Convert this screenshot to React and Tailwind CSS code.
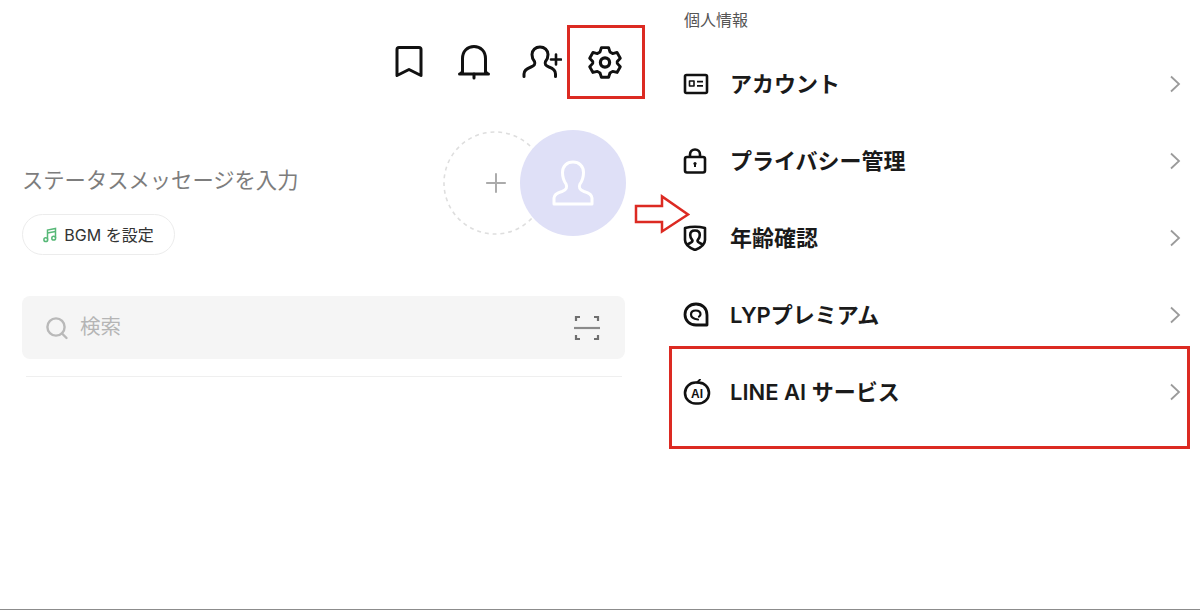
import React from "react";

function Bookmark() {
  return (
    <svg width="30" height="34" viewBox="0 0 30 34" fill="none" stroke="#111" strokeWidth="3" strokeLinejoin="round" strokeLinecap="round">
      <path d="M3 4.5 Q3 2.5 5 2.5 H25 Q27 2.5 27 4.5 V30.5 L15 24.5 L3 30.5 Z" />
    </svg>
  );
}
function Bell() {
  return (
    <svg width="34" height="36" viewBox="0 0 34 36" fill="none" stroke="#111" strokeWidth="3" strokeLinejoin="round" strokeLinecap="round">
      <path d="M5.5 28.5 V14.5 C5.5 7 10.5 2.5 17 2.5 C23.5 2.5 28.5 7 28.5 14.5 V28.5" />
      <path d="M2.5 30 H31.5 M5.5 28 L3 30 M28.5 28 L31 30" />
      <path d="M17 30 V34" />
    </svg>
  );
}
function AddFriend() {
  return (
    <svg width="40" height="34" viewBox="0 0 40 34" fill="none" stroke="#111" strokeWidth="3" strokeLinejoin="round" strokeLinecap="round">
      <path d="M2 31.5 V29 C2 25.5 5 23.5 9 22 C12.5 20.7 13.5 19 12.5 16.5 C10.8 14.5 10 12 10 9.5 C10 5 13.5 2 18 2 C22.5 2 26 5 26 9.5 C26 12 25.2 14.5 23.5 16.5 C22.5 19 23.5 20.7 27 22 C30.5 23.2 33.5 25.5 33.5 29 V31.5" />
      <path d="M29 14.5 H39 M34 9.5 V19.5" strokeWidth="2.6" />
    </svg>
  );
}
function Gear() {
  return (
    <svg width="36" height="38" viewBox="0 0 36 38" fill="none" stroke="#111" strokeWidth="3.2" strokeLinejoin="round">
      <path d="M14 3 H22 L23.5 7.8 L26.5 9.6 L31.4 8.4 L35 14.8 L31.6 18.5 V20.5 L35 24.2 L31.4 30.6 L26.5 29.4 L23.5 31.2 L22 36 H14 L12.5 31.2 L9.5 29.4 L4.6 30.6 L1 24.2 L4.4 20.5 V18.5 L1 14.8 L4.6 8.4 L9.5 9.6 L12.5 7.8 Z" transform="translate(1.8 1.9) scale(0.9)" />
      <circle cx="18" cy="19.5" r="4.6" />
    </svg>
  );
}
function PlaceholderPerson() {
  return (
    <svg width="44" height="46" viewBox="0 0 44 46" fill="none" stroke="#fff" strokeWidth="3" strokeLinejoin="round">
      <path d="M3 44 V38 C3 34.5 6 33 11 31.5 C15.5 30 16.5 27 15 24 C12.5 20.5 11.5 17 11.5 12.5 C11.5 6 16 2 22 2 C28 2 32.5 6 32.5 12.5 C32.5 17 31.5 20.5 29 24 C27.5 27 28.5 30 33 31.5 C38 33 41 34.5 41 38 V44 Z" />
    </svg>
  );
}
function Music() {
  return (
    <svg width="14" height="16" viewBox="0 0 14 16" fill="none" stroke="#57b877" strokeWidth="1.5">
      <path d="M4.5 12.5 V3 L12.5 1.5 V11" />
      <path d="M4.5 6 L12.5 4.5" />
      <circle cx="2.8" cy="12.7" r="1.9" />
      <circle cx="10.7" cy="11.2" r="1.9" />
    </svg>
  );
}
function Search() {
  return (
    <svg width="24" height="24" viewBox="0 0 24 24" fill="none" stroke="#b9b9b9" strokeWidth="2.4" strokeLinecap="round">
      <circle cx="11" cy="11" r="8.6" />
      <path d="M17 17.5 L21.5 22" />
    </svg>
  );
}
function Scan() {
  return (
    <svg width="26" height="26" viewBox="0 0 26 26" fill="none" stroke="#6f6f6f" strokeWidth="2.2">
      <path d="M2 6 V2 H6 M20 2 H24 V6 M2 20 V24 H6 M20 24 H24 V20" />
      <path d="M0 13 H26" stroke="#8a8a8a" />
    </svg>
  );
}
function IdCard() {
  return (
    <svg width="26" height="24" viewBox="0 0 26 24" fill="none" stroke="#111" strokeWidth="2.6" strokeLinejoin="round">
      <rect x="2" y="3" width="22" height="18" rx="1.5" />
      <rect x="6.5" y="9" width="4.5" height="5" fill="none" strokeWidth="1.6" />
      <path d="M14 9.6 H20 M14 13.8 H20" strokeWidth="1.8" />
    </svg>
  );
}
function Lock() {
  return (
    <svg width="24" height="26" viewBox="0 0 24 26" fill="none" stroke="#111" strokeWidth="2.6" strokeLinejoin="round">
      <rect x="2" y="9" width="20" height="15.5" rx="2" />
      <path d="M7 9 V6.5 C7 3.5 9 1.5 12 1.5 C15 1.5 17 3.5 17 6.5 V9" />
      <circle cx="12" cy="15.5" r="1.6" fill="#111" stroke="none" />
      <path d="M12 16 V19" strokeWidth="2" />
    </svg>
  );
}
function Shield() {
  return (
    <svg width="24" height="26" viewBox="0 0 24 26" fill="none" stroke="#111" strokeWidth="2.6" strokeLinejoin="round">
      <path d="M2 3 Q12 0.5 22 3 V15 C22 20 17 23 12 25 C7 23 2 20 2 15 Z" />
      <path d="M4 20 C6 18 9.5 18 9.5 15.5 C8 14 7.2 12 7.2 10 C7.2 7.2 9.2 5.5 12 5.5 C14.8 5.5 16.8 7.2 16.8 10 C16.8 12 16 14 14.5 15.5 C14.5 18 18 18 20 20" />
    </svg>
  );
}
function Premium() {
  return (
    <svg width="26" height="26" viewBox="0 0 26 26" fill="none" stroke="#111" strokeWidth="2.8" strokeLinecap="round" strokeLinejoin="round">
      <path d="M13 2 C6.5 2 2 6.5 2 12.5 C2 18.5 6.5 23 13 23 H24 V13 C24 6.5 19.5 2 13 2 Z" />
      <path d="M15 17.5 C11 17 8 15.5 8 12.5 C8 10 10 8.5 12.8 8.5 C15.5 8.5 17.5 10 17.5 12.3 C17.5 13.2 17 14 16 14.6" strokeWidth="2.2" />
    </svg>
  );
}
function AiIcon() {
  return (
    <svg width="28" height="26" viewBox="0 0 28 26" fill="none" stroke="#111" strokeWidth="2.6" strokeLinecap="round" strokeLinejoin="round">
      <rect x="2" y="3.5" width="24" height="21" rx="10.5" />
      <path d="M17 0.5 L14 3.5 L18 4.5" strokeWidth="1.8" />
      <text x="14" y="18.5" textAnchor="middle" fontSize="12" fontWeight="700" fill="#111" stroke="none" fontFamily="'Liberation Sans', sans-serif">AI</text>
    </svg>
  );
}
function Chevron() {
  return (
    <svg width="12" height="18" viewBox="0 0 12 18" fill="none" stroke="#9b9b9b" strokeWidth="1.8">
      <path d="M2 1.5 L10 9 L2 16.5" />
    </svg>
  );
}

const rows = [
  { icon: <IdCard />, label: "アカウント" },
  { icon: <Lock />, label: "プライバシー管理" },
  { icon: <Shield />, label: "年齢確認" },
  { icon: <Premium />, label: "LYPプレミアム" },
  { icon: <AiIcon />, label: "LINE AI サービス" },
];

export default function App() {
  return (
    <div className="relative flex h-[610px] w-[1200px] overflow-hidden border-b border-[#8c8c8c] bg-white font-['Inter','Noto_Sans_CJK_JP',sans-serif]">
      <div className="w-[682px] shrink-0 pl-[22px] pr-[57px]">
        <div className="mt-[44px] flex h-[36px] items-center justify-end gap-[31px] pr-[2px]">
          <Bookmark />
          <div className="ml-[2px]"><Bell /></div>
          <AddFriend />
          <div className="-ml-[6px]"><Gear /></div>
        </div>
        <div className="mt-[50px] flex h-[106px] items-center justify-between">
          <div className="mb-[7px] text-[21.3px] leading-[30px] text-[#7d7d7d]">ステータスメッセージを入力</div>
          <div className="flex items-center">
            <div className="flex h-[106px] w-[106px] items-center justify-center pr-[2px]">
              <svg width="106" height="106" viewBox="0 0 106 106" fill="none">
                <circle cx="53" cy="53" r="52" stroke="#dedede" strokeWidth="1.6" strokeDasharray="4 4" />
                <path d="M54 43 V63 M44 53 H64" stroke="#ababab" strokeWidth="2" />
              </svg>
            </div>
            <div className="-ml-[30px] flex h-[106px] w-[106px] translate-x-[1px] items-center justify-center rounded-full bg-[#dfe0f7]">
              <PlaceholderPerson />
            </div>
          </div>
        </div>
        <div className="-mt-[22px] flex h-[41px] w-[153px] items-center justify-center gap-[7px] rounded-full border border-[#ececec] text-[16px] text-[#333]">
          <Music />
          <span>BGM を設定</span>
        </div>
        <div className="mt-[41px] flex h-[63px] w-[603px] items-center rounded-lg bg-[#f5f5f5] pl-[23px] pr-[25px]">
          <Search />
          <span className="ml-[11px] text-[20.5px] text-[#b5b5b5]">検索</span>
          <div className="ml-auto"><Scan /></div>
        </div>
        <div className="ml-[4px] mt-[17px] h-px w-[596px] bg-[#efefef]" />
      </div>
      <div className="flex-1 pr-[18px]">
        <div className="ml-[2px] flex h-[39px] items-center text-[16px] text-[#555]">個人情報</div>
        <div className="mt-[6px] flex flex-col">
          {rows.map((r) => (
            <div key={r.label} className="flex h-[77px] items-center">
              <div className="flex w-[48px] items-center justify-start pl-[1px]">{r.icon}</div>
              <span className="text-[22px] font-semibold leading-none text-[#1a1a1a]">{r.label}</span>
              <div className="ml-auto -translate-x-[1px]"><Chevron /></div>
            </div>
          ))}
        </div>
      </div>

      <div className="absolute left-[567px] top-[25px] h-[74px] w-[78px] border-[3px] border-[#dc2a22]" />
      <div className="absolute left-[669px] top-[346px] h-[103px] w-[521px] border-[3px] border-[#dc2a22]" />
      <svg className="absolute left-[633px] top-[193px]" width="60" height="42" viewBox="0 0 60 42" fill="none" stroke="#dc2a22" strokeWidth="2.5">
        <path d="M3 13 H29 V3.5 L55 21.5 L29 38.5 V29 H3 Z" />
      </svg>
    </div>
  );
}
